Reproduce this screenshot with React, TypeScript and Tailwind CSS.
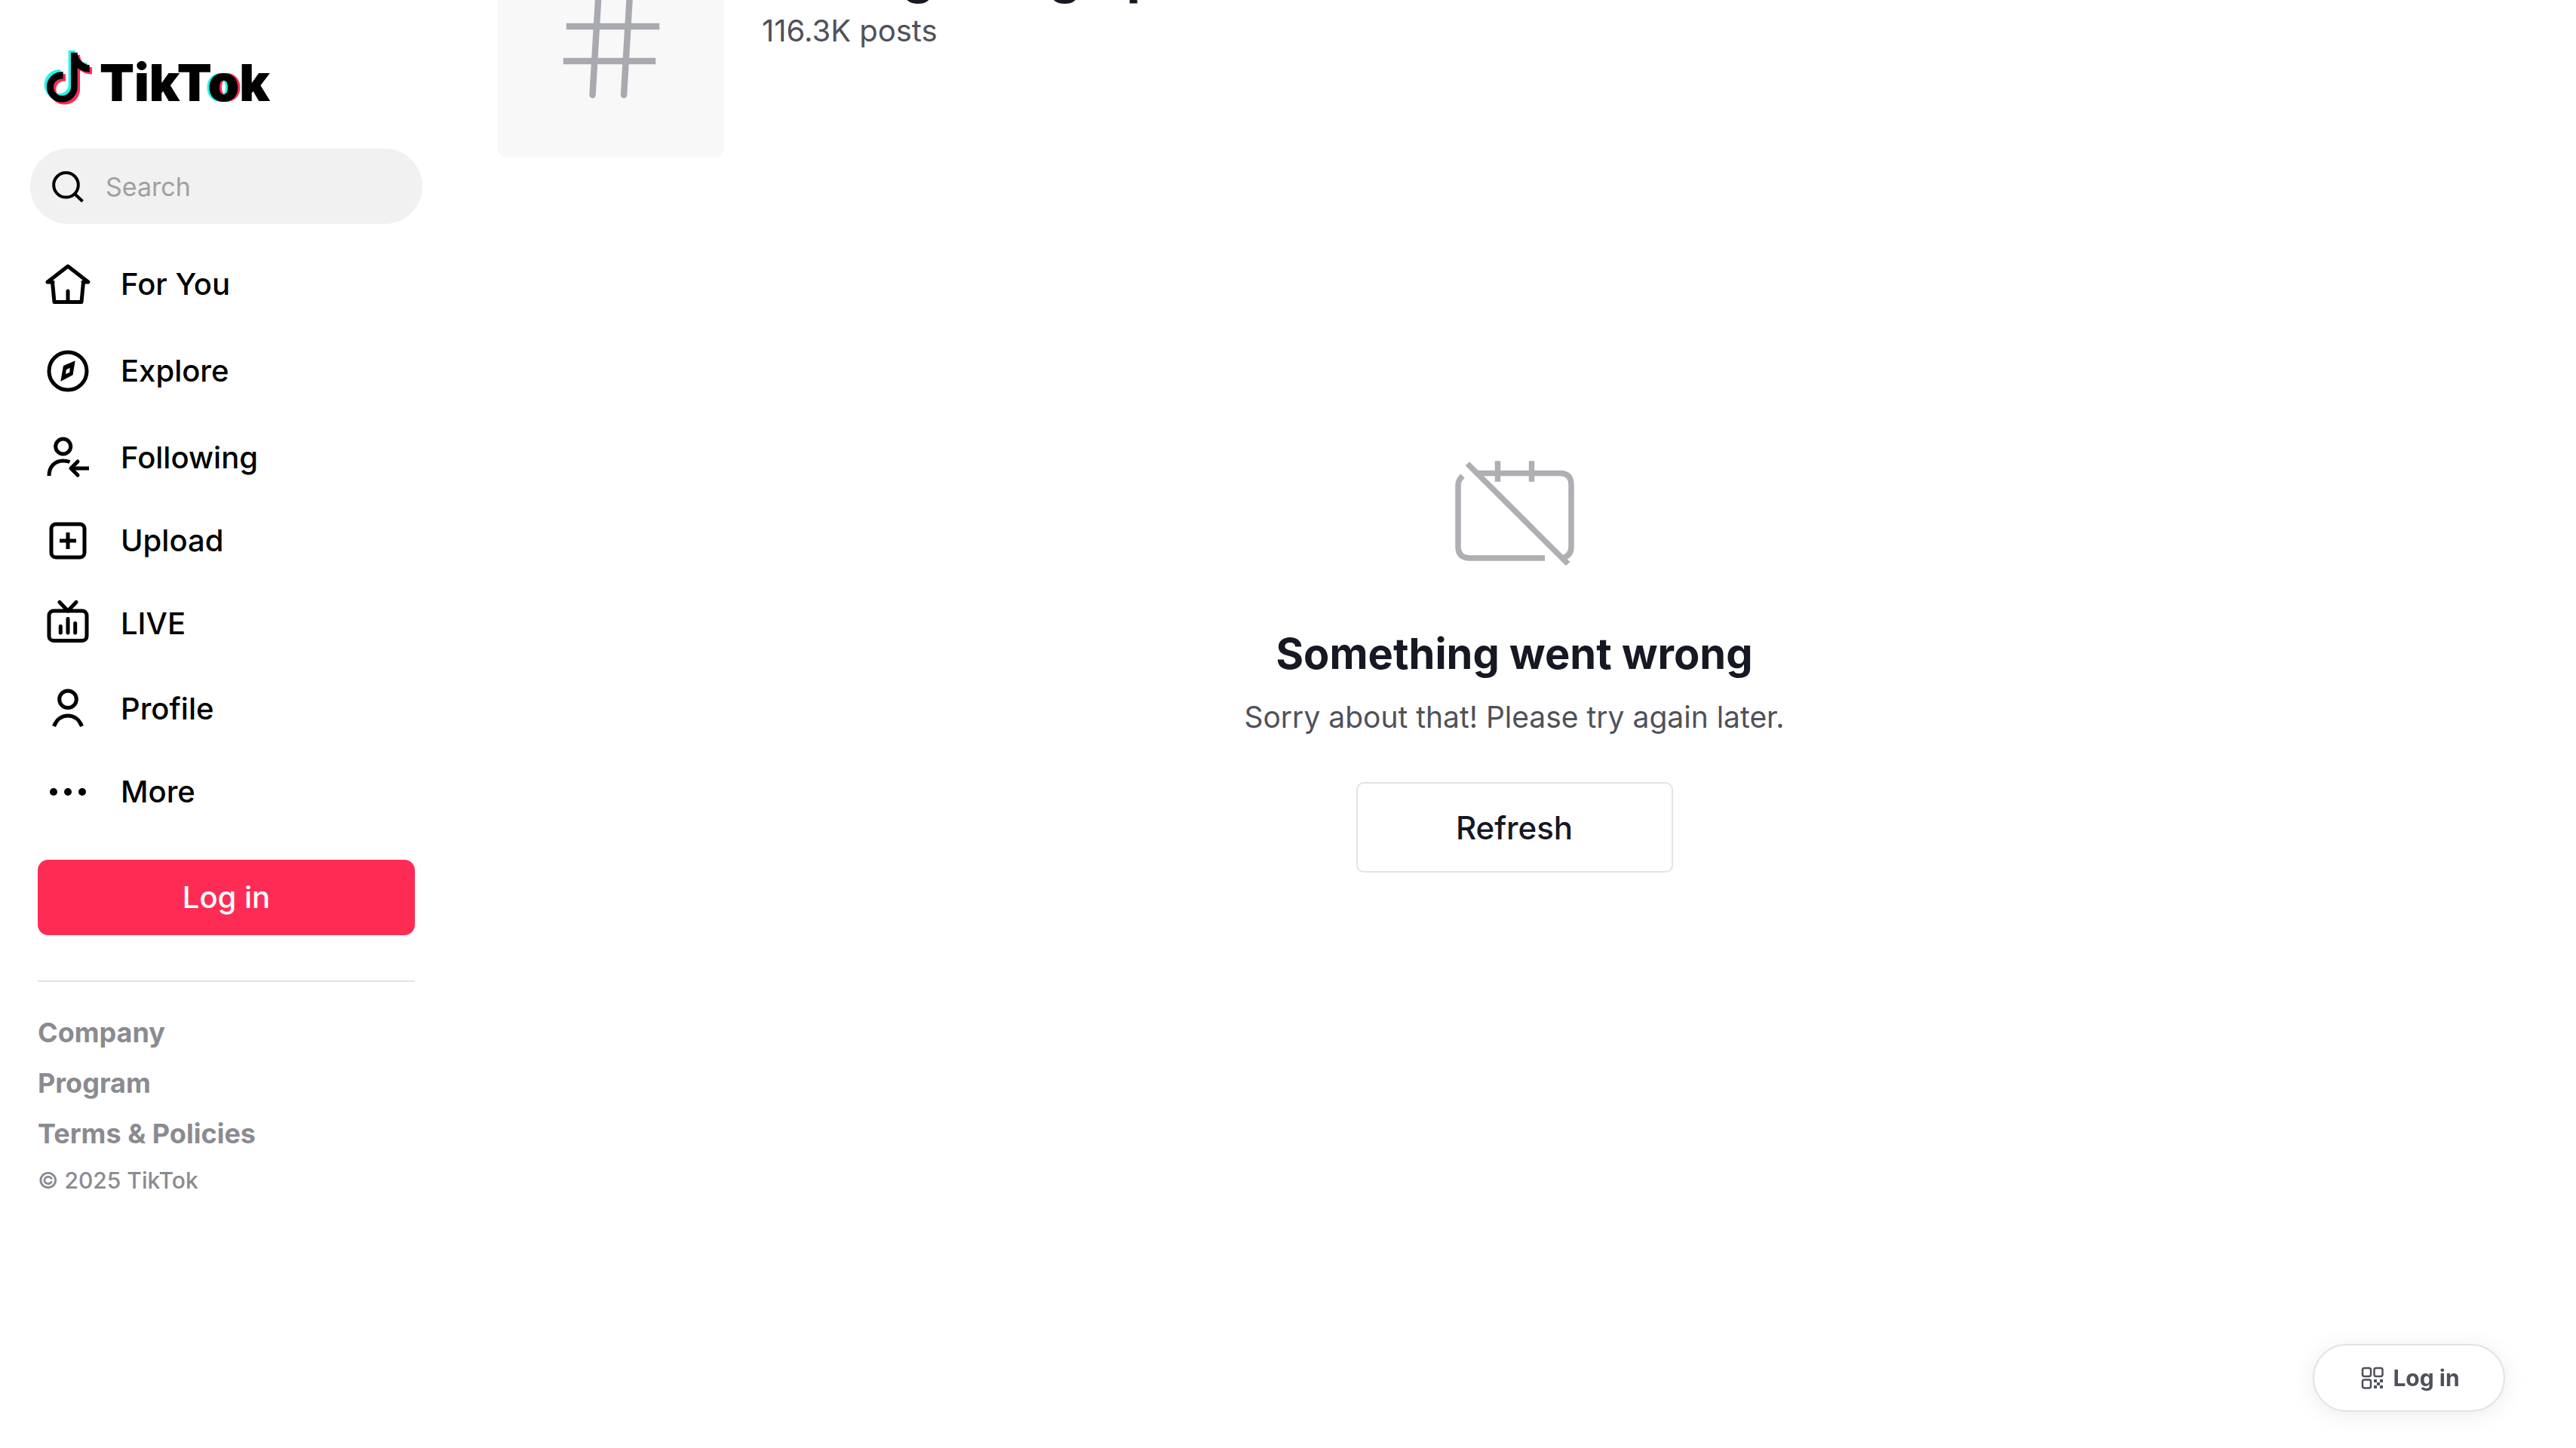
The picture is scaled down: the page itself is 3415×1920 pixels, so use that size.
import React from "react";

type NavItem = { label: string; space: string; icon: React.ReactNode };

const NAV: NavItem[] = [
  {
    label: "For You",
    space: "mb-[5px]",
    icon: <path d="M12 29H5L32 8l27 21h-7M11.500 29 14 55.500h36L52.500 29M32 41v14" />,
  },
  {
    label: "Explore",
    space: "mb-[5px]",
    icon: (
      <>
        <circle cx="32" cy="32" r="25" />
        <path
          fill="currentColor"
          stroke="none"
          fillRule="evenodd"
          d="M41.700 18.300 26 25 22.300 45.700 38.500 37.300ZM34.700 27.700 29.800 30.300 29 36 34.300 33.700Z"
        />
      </>
    ),
  },
  {
    label: "Following",
    space: "",
    icon: (
      <>
        <circle cx="25.700" cy="17" r="10" />
        <path strokeLinecap="butt" d="M7 56C7 43.500 15 36 25.500 36c3 0 6 .4 9 1.500M60 46H36" />
        <path d="M45 37l-9 9 9 9" />
      </>
    ),
  },
  {
    label: "Upload",
    space: "",
    icon: (
      <>
        <rect x="10" y="10" width="44" height="44" rx="6" />
        <path strokeLinecap="butt" d="M32 21v22M21 32h22" />
      </>
    ),
  },
  {
    label: "LIVE",
    space: "mb-[3px]",
    icon: (
      <>
        <rect x="7" y="15" width="50" height="39.500" rx="6" />
        <path d="M21 3.500 32 15 43 3.500M22.300 35.500v8.500M32 25.500v18.500M41.700 31.500v12.500" />
      </>
    ),
  },
  {
    label: "Profile",
    space: "",
    icon: (
      <>
        <circle cx="32" cy="19.300" r="11.300" />
        <path strokeLinecap="butt" d="M13.500 55C17 46 24 41 32 41s15 5 18.500 14" />
      </>
    ),
  },
  {
    label: "More",
    space: "",
    icon: (
      <g fill="currentColor" stroke="none">
        <circle cx="13" cy="32" r="5" />
        <circle cx="32" cy="32" r="5" />
        <circle cx="51" cy="32" r="5" />
      </g>
    ),
  },
];

const NOTE =
  "M196 86H222C223 112 244 134 270 135V163C252 163 236 157 222 147V222C222 256 195 283 161 283S100 256 100 222S127 162 161 162H165V190C145 188 127 202 127 222C127 242 142 257 161 257S196 242 196 222Z";

function Logo() {
  return (
    <a href="#" aria-label="TikTok" className="flex h-[76px] items-center gap-2 pl-2">
      <svg className="h-[75px] w-[66px]" viewBox="88 72 198 224" aria-hidden="true">
        <path d={NOTE} fill="#25f4ee" transform="translate(-10 -9)" />
        <path d={NOTE} fill="#fe2c55" transform="translate(10 9)" />
        <path d={NOTE} fill="#000" />
      </svg>
      <span className="pt-4 text-[67px] leading-[76px] font-black text-black">
        TikT<span className="[text-shadow:-3px_0_#25f4ee,3px_0_#fe2c55]">o</span>k
      </span>
    </a>
  );
}

function Sidebar() {
  return (
    <aside className="flex w-[600px] shrink-0 flex-col px-[50px] pt-16">
      <Logo />
      <label className="-mx-2.5 mt-[57px] flex h-[100px] items-center gap-[26px] rounded-full bg-[#f1f1f1] pr-8 pl-[26px]">
        <svg className="size-12 shrink-0" viewBox="0 0 48 48" fill="none" stroke="#000" strokeWidth="4" aria-hidden="true">
          <circle cx="21.500" cy="22.300" r="16.300" />
          <path d="M33 34l10.500 10" />
        </svg>
        <input
          type="search"
          aria-label="Search"
          placeholder="Search"
          className="w-full min-w-0 bg-transparent text-[34px] text-black outline-none placeholder:text-[#a0a0a0]"
        />
      </label>
      <nav className="mt-[25px] flex flex-col pl-2">
        {NAV.map((n) => (
          <a key={n.label} href="#" className={`flex h-[110px] items-center gap-[38px] text-[40px] font-medium text-black ${n.space}`}>
            <svg
              className="size-16"
              viewBox="0 0 64 64"
              fill="none"
              stroke="currentColor"
              strokeWidth="5"
              strokeLinecap="round"
              strokeLinejoin="round"
              aria-hidden="true"
            >
              {n.icon}
            </svg>
            {n.label}
          </a>
        ))}
      </nav>
      <button className="mt-[35px] h-[100px] rounded-[14px] bg-[#fe2c55] text-[40px] font-medium text-white">Log in</button>
      <hr className="mt-[60px] border-t-2 border-[#e3e3e4]" />
      <div className="mt-[34px] flex flex-col items-start text-[36px] leading-[67px] font-bold text-[#8a8b91]">
        <button>Company</button>
        <button>Program</button>
        <button>Terms &amp; Policies</button>
      </div>
      <p className="text-[30px] leading-[56px] font-medium text-[#8a8b91]">© 2025 TikTok</p>
    </aside>
  );
}

export default function App() {
  return (
    <div className="flex min-h-screen overflow-hidden bg-white font-['Inter',sans-serif]">
      <Sidebar />
      <main className="-mt-[91px] flex-1 px-[60px]">
        <header className="flex gap-[50px]">
          <div className="flex size-[300px] shrink-0 items-center justify-center rounded-xl bg-[#f8f8f8]">
            <svg className="size-[144px]" viewBox="0 0 144 144" fill="none" stroke="#a9aab0" strokeWidth="8.500" strokeLinecap="round" aria-hidden="true">
              <path strokeLinecap="square" d="M17 48h115M13 94h114" />
              <path d="M55.500 5 47.500 139M97 5 89 139" />
            </svg>
          </div>
          <div className="pt-[14px]">
            <h1 className="text-[69px] leading-[84px] font-bold text-[#161823]">#lovegetting up</h1>
            <h2 className="text-[40px] leading-[68px] text-[#4f515a]">116.3K posts</h2>
          </div>
        </header>
        <section className="flex flex-col items-center pt-[390px]">
          <svg className="h-[160px] w-[180px]" viewBox="7 0 180 160" fill="none" stroke="#aeafb3" strokeWidth="7.500" aria-hidden="true">
            <path d="M45 28.500H157Q172 28.500 172 44V126Q172 138 160 141M28 32Q22 38 22 44V126Q22 141 38 141H137" />
            <path d="M74.500 16v20M119.500 16v20M37 18.500 165 146" strokeLinecap="square" />
          </svg>
          <h2 className="mt-[70px] text-[56px] leading-[76px] font-bold text-[#161823]">Something went wrong</h2>
          <p className="mt-4 text-[39px] leading-[60px] text-[#4f515a]">Sorry about that! Please try again later.</p>
          <button className="mt-14 h-[120px] w-[420px] rounded-[10px] border-2 border-[#e3e3e4] text-[42px] font-medium text-[#161823]">Refresh</button>
        </section>
      </main>
      <button className="fixed right-[94px] bottom-12 flex h-[90px] w-[255px] items-center justify-center gap-3 rounded-full border-2 border-[#e3e3e4] bg-white pl-1 text-[30px] font-bold text-[#4f515a] shadow-[0_4px_30px_rgba(0,0,0,0.08)]">
        <svg className="size-[30px]" viewBox="0 0 30 30" fill="none" stroke="currentColor" strokeWidth="2.500" aria-hidden="true">
          <rect x="2" y="2" width="11" height="11" rx="2.500" />
          <rect x="17.500" y="2" width="11" height="11" rx="2.500" />
          <rect x="2" y="17.500" width="11" height="11" rx="2.500" />
          <path fill="currentColor" stroke="none" d="M17 17h4v4h-4zM25 17h4v4h-4zM21 21h4v4h-4zM17 25h4v4h-4zM25 25h4v4h-4z" />
        </svg>
        Log in
      </button>
    </div>
  );
}
